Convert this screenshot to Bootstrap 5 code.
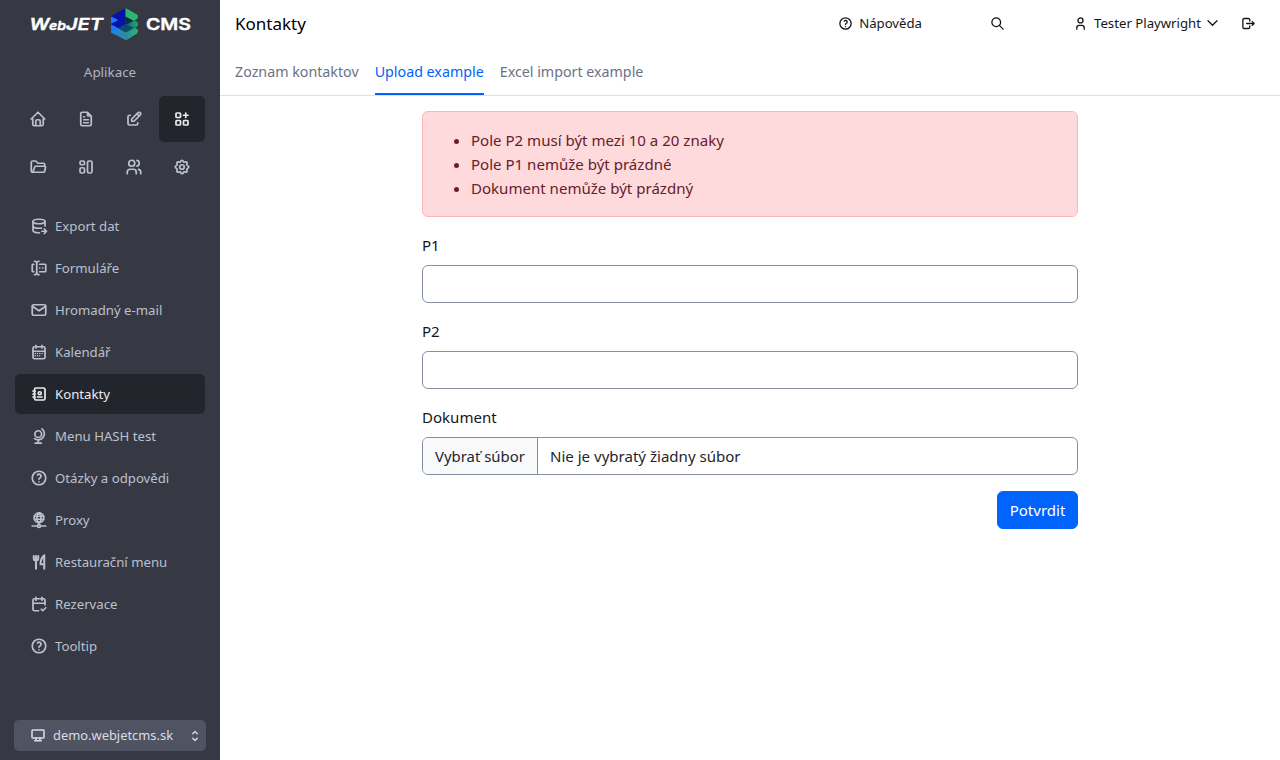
<!DOCTYPE html>
<html lang="cs">
<head>
<meta charset="utf-8">
<meta name="viewport" content="width=device-width, initial-scale=1">
<title>Kontakty</title>
<link href="https://cdn.jsdelivr.net/npm/bootstrap@5.3.0/dist/css/bootstrap.min.css" rel="stylesheet">
<style>
  body { font-family: "Noto Sans", "Open Sans", sans-serif; font-size: 15.05px; line-height: 24px; color: #13151b; }
  .ti { fill: none; stroke: currentColor; stroke-width: 2.3; stroke-linecap: round; stroke-linejoin: round; width: 18px; height: 18px; flex: none; display: block; }
  .ti-sm { width: 15px; height: 15px; stroke-width: 2.1; }
  .sidebar { width: 220px; background: #363944; color: #bcc0cd; font-size: 13.2px; }
  .brand-logo { width: 220px; height: 48px; display: block; }
  .section-title { height: 48px; color: #b0b4c3; font-size: 13.4px; }
  .tiles { display: grid; grid-template-columns: repeat(4, 46px); gap: 2px; padding: 0 15px; }
  .tile { height: 46px; border-radius: 5px; color: inherit; display: flex; align-items: center; justify-content: center; }
  .menu { gap: 2px; margin-top: 16px; padding: 0 15px; }
  .menu .nav-link { height: 40px; padding: 0 0 0 15px; border-radius: 5px; color: inherit; gap: 7px; display: flex; align-items: center; }
  .sidebar .active { background: #23252d; color: #e9eaf0 !important; }
  .domain { height: 31px; margin: 0 14px 9px; padding: 0 7px 0 16px; border-radius: 5px; background: #4f5362; color: #dadce5; font-size: 12.9px; gap: 7px; }
  .domain .ti { width: 16px; height: 16px; }
  .domain span { margin-top: -2px; }
  .topbar { height: 48px; padding: 0 15px; }
  .page-title { font-size: 17px; font-weight: 400; line-height: 24px; color: #000; }
  .tools { font-size: 13.2px; margin-top: -2px; }
  .tools a { color: inherit; text-decoration: none; display: flex; align-items: center; gap: 6px; white-space: nowrap; }
  .help-link { margin-right: 68px; }
  .search-link { margin-right: 68px; }
  .user-link { margin-right: 23px; }
  .exit-link { margin-right: 9px; }
  .tabs { height: 48px; padding: 0 15px; gap: 16px; border-bottom: 1px solid #dde0e6; font-size: 14.25px; }
  .tabs .nav-link { padding: 0; height: 47px; line-height: 47px; color: #6c7186; white-space: nowrap; }
  .tabs .nav-link.active { color: #0063fb; border-bottom: 2px solid #0063fb; }
  .form-wrap { width: 656px; margin: 15px auto 0; }
  .alert-danger { --bs-alert-bg: #ffdadd; --bs-alert-border-color: #ffb4ba; --bs-alert-color: #66202a; border-radius: 6px; padding: 16px; margin-bottom: 16px; }
  .form-label { margin-bottom: 8px; display: block; }
  .form-control, .file-box { border: 1px solid #868ea5; border-radius: 6px; height: 38px; }
  .file-btn { background: #f8f9fb; border-right: 1px solid #868ea5; width: 115px; padding-left: 12px; font-size: 14.9px; }
  .file-box { color: #23252d; }
  .btn-primary { --bs-btn-bg: #0063fb; --bs-btn-border-color: #0063fb; height: 38px; width: 81px; padding: 0; font-size: 15px; }
</style>
</head>
<body class="bg-white">
<svg class="d-none">
  <symbol id="help" viewBox="0 0 24 24"><circle cx="12" cy="12" r="9"/><path d="M12 17v.01M12 13.5a1.5 1.5 0 0 1 1-1.5 2.6 2.6 0 1 0-3-4"/></symbol>
</svg>
<div class="d-flex vh-100 overflow-hidden">
  <aside class="sidebar d-flex flex-column flex-shrink-0">
    <svg class="brand-logo" viewBox="0 0 220 48">
      <g fill="#fff" stroke="#fff" stroke-width=".4" font-family="Inter, Roboto, sans-serif" font-weight="600">
        <g font-style="italic">
          <text x="29.500" y="29.600" font-size="16.500" textLength="20" lengthAdjust="spacingAndGlyphs">W</text>
          <text x="49" y="29.600" font-size="12" textLength="17" lengthAdjust="spacingAndGlyphs">eb</text>
          <text x="66" y="29.600" font-size="16.500" textLength="37" lengthAdjust="spacingAndGlyphs">JET</text>
        </g>
        <text x="146" y="29.600" font-size="16.500" textLength="45" lengthAdjust="spacingAndGlyphs">CMS</text>
      </g>
      <defs>
        <linearGradient id="lg1"><stop stop-color="#2380e8"/><stop offset=".55" stop-color="#2c8c9c"/><stop offset="1" stop-color="#2bb673"/></linearGradient>
        <linearGradient id="lg2"><stop stop-color="#04104c"/><stop offset="1" stop-color="#24a877"/></linearGradient>
      </defs>
      <path d="M111 16.500V33l7.500-4.500L126 32V17z" fill="#1e78f8"/>
      <path d="M111 32.500l7.500-4.500 7.500 4 8.500-4.500 2.500 1.500q2 2 0 4.500l-9.500 6q-1.500.8-3 0z" fill="url(#lg1)"/>
      <path d="M111 24l14.500-7.500L134 20l3 2q2 2 0 4.500l-9.500 5.500q-1.500.8-3 0z" fill="url(#lg2)"/>
      <path d="M111 24l7.500-3.500 7.500 4v7.500z" fill="#0a3db5"/>
      <path d="M111 16.200L125.500 8v16l-7 4-7.500-4 7.500-3.700z" fill="#0713a6"/>
      <path d="M125.500 8l11.500 6.500q2 2 0 4.500l-3.500 2-8-4z" fill="#2cb66f"/>
      <path d="M125.500 16.500l8.200 4.300-8.200 4.200z" fill="#04303c"/>
      <path d="M118.500 28l7-3.500 8.500 3.300-8 4.200z" fill="#0b4b6b"/>
    </svg>
    <div class="section-title d-flex align-items-center justify-content-center">Aplikace</div>
    <div class="tiles">
      <a class="tile" href="#"><svg class="ti" viewBox="0 0 24 24"><path d="M5 12H3l9-9 9 9h-2M5 12v7a2 2 0 0 0 2 2h10a2 2 0 0 0 2-2v-7M9 21v-6a2 2 0 0 1 2-2h2a2 2 0 0 1 2 2v6"/></svg></a>
      <a class="tile" href="#"><svg class="ti" viewBox="0 0 24 24"><path d="M14 3v4a1 1 0 0 0 1 1h4M17 21H7a2 2 0 0 1-2-2V5a2 2 0 0 1 2-2h7l5 5v11a2 2 0 0 1-2 2zM9 9h1M9 13h6M9 17h6"/></svg></a>
      <a class="tile" href="#"><svg class="ti" viewBox="0 0 24 24"><path d="M7 7H6a2 2 0 0 0-2 2v9a2 2 0 0 0 2 2h9a2 2 0 0 0 2-2v-1M20.385 6.585a2.100 2.100 0 0 0-2.970-2.970L9 12v3h3l8.385-8.415zM16 5l3 3"/></svg></a>
      <a class="tile active" href="#"><svg class="ti" viewBox="0 0 24 24"><rect x="4" y="4" width="6" height="6" rx="1"/><rect x="4" y="14" width="6" height="6" rx="1"/><rect x="14" y="14" width="6" height="6" rx="1"/><path d="M14 7h6M17 4v6"/></svg></a>
      <a class="tile" href="#"><svg class="ti" viewBox="0 0 24 24"><path d="M5 19l2.757-7.351A1 1 0 0 1 8.693 11H21a1 1 0 0 1 .986 1.164l-.996 5.211A2 2 0 0 1 19.026 19H5a2 2 0 0 1-2-2V6a2 2 0 0 1 2-2h4l3 3h7a2 2 0 0 1 2 2v2"/></svg></a>
      <a class="tile" href="#"><svg class="ti" viewBox="0 0 24 24"><rect x="4" y="4" width="6" height="5" rx="2"/><rect x="4" y="13" width="6" height="7" rx="2"/><rect x="14" y="4" width="6" height="16" rx="2"/></svg></a>
      <a class="tile" href="#"><svg class="ti" viewBox="0 0 24 24"><circle cx="9" cy="7" r="4"/><path d="M3 21v-2a4 4 0 0 1 4-4h4a4 4 0 0 1 4 4v2M16 3.130a4 4 0 0 1 0 7.750M21 21v-2a4 4 0 0 0-3-3.850"/></svg></a>
      <a class="tile" href="#"><svg class="ti" viewBox="0 0 24 24"><path d="M10.325 4.317c.426-1.756 2.924-1.756 3.350 0a1.724 1.724 0 0 0 2.573 1.066c1.543-.940 3.310.826 2.370 2.370a1.724 1.724 0 0 0 1.065 2.572c1.756.426 1.756 2.924 0 3.350a1.724 1.724 0 0 0-1.066 2.573c.940 1.543-.826 3.310-2.370 2.370a1.724 1.724 0 0 0-2.572 1.065c-.426 1.756-2.924 1.756-3.350 0a1.724 1.724 0 0 0-2.573-1.066c-1.543.940-3.310-.826-2.370-2.370a1.724 1.724 0 0 0-1.065-2.572c-1.756-.426-1.756-2.924 0-3.350a1.724 1.724 0 0 0 1.066-2.573c-.940-1.543.826-3.310 2.370-2.370 1 .608 2.296.070 2.572-1.065z"/><circle cx="12" cy="12" r="3"/></svg></a>
    </div>
    <nav class="menu nav flex-column flex-grow-1">
      <a class="nav-link" href="#"><svg class="ti" viewBox="0 0 24 24"><ellipse cx="12" cy="6" rx="8" ry="3"/><path d="M4 6v6c0 1.657 3.582 3 8 3 1.118 0 2.183-.086 3.150-.241M20 12V6M4 12v6c0 1.657 3.582 3 8 3 .157 0 .312-.002.466-.005M16 19h6M19 16l3 3-3 3"/></svg>Export dat</a>
      <a class="nav-link" href="#"><svg class="ti" viewBox="0 0 24 24"><path d="M12 3a3 3 0 0 0-3 3v12a3 3 0 0 0 3 3M6 3a3 3 0 0 1 3 3v12a3 3 0 0 1-3 3M13 7h7a1 1 0 0 1 1 1v8a1 1 0 0 1-1 1h-7M5 7H4a1 1 0 0 0-1 1v8a1 1 0 0 0 1 1h1M17 12h.01M13 12h.01"/></svg>Formuláře</a>
      <a class="nav-link" href="#"><svg class="ti" viewBox="0 0 24 24"><rect x="3" y="5" width="18" height="14" rx="2"/><path d="M3 7l9 6 9-6"/></svg>Hromadný e-mail</a>
      <a class="nav-link" href="#"><svg class="ti" viewBox="0 0 24 24"><rect x="4" y="5" width="16" height="16" rx="2"/><path d="M16 3v4M8 3v4M4 11h16M7 14h.013M10.010 14h.005M13.010 14h.005M16.015 14h.005M13.015 17h.005M7.010 17h.005M10.010 17h.005" stroke-width="2"/></svg>Kalendář</a>
      <a class="nav-link active" href="#"><svg class="ti" viewBox="0 0 24 24"><path d="M20 6v12a2 2 0 0 1-2 2H8a2 2 0 0 1-2-2V6a2 2 0 0 1 2-2h10a2 2 0 0 1 2 2zM10 16h6M4 8h3M4 12h3M4 16h3"/><circle cx="13" cy="11" r="2"/></svg>Kontakty</a>
      <a class="nav-link" href="#"><svg class="ti" viewBox="0 0 24 24"><circle cx="11" cy="9.500" r="4.500"/><path d="M6 15.500A8.200 8.200 0 1 0 16 2.500M11 18v3.500M7 21.500h8"/></svg>Menu HASH test</a>
      <a class="nav-link" href="#"><svg class="ti"><use href="#help"/></svg>Otázky a odpovědi</a>
      <a class="nav-link" href="#"><svg class="ti" viewBox="0 0 24 24"><circle cx="12" cy="9" r="6.500"/><path d="M12 2.500c1.333.5 2.800 3 2.800 6.500s-1.467 6-2.800 6.500c-1.333-.5-2.800-3-2.800-6.500s1.467-6 2.800-6.500M6 7h12M6 11h12M3 20h7M14 20h7M12 15v3"/><circle cx="12" cy="20" r="2"/></svg>Proxy</a>
      <a class="nav-link" href="#"><svg class="ti" viewBox="0 0 24 24"><path d="M19 3v12h-5c-.023-3.681.184-7.406 5-12zM19 15v6M8 4v17M5 4v3a3 3 0 1 0 6 0V4M8 4v5" stroke-width="2.700"/></svg>Restaurační menu</a>
      <a class="nav-link" href="#"><svg class="ti" viewBox="0 0 24 24"><path d="M11.500 21H6a2 2 0 0 1-2-2V7a2 2 0 0 1 2-2h12a2 2 0 0 1 2 2v6M16 3v4M8 3v4M4 11h16M15 19l2 2 4-4"/></svg>Rezervace</a>
      <a class="nav-link" href="#"><svg class="ti"><use href="#help"/></svg>Tooltip</a>
    </nav>
    <div class="domain d-flex align-items-center">
      <svg class="ti" viewBox="0 0 24 24"><rect x="3" y="3" width="18" height="12" rx="1"/><path d="M7 19h10M9 15v4M15 15v4"/></svg>
      <span class="me-auto">demo.webjetcms.sk</span>
      <svg width="8" height="12" viewBox="0 0 8 12" fill="none" stroke="currentColor" stroke-width="1.300" stroke-linecap="round" stroke-linejoin="round"><path d="M1.700 3.800L4 1.500 6.300 3.800M1.700 8.200L4 10.500 6.300 8.200"/></svg>
    </div>
  </aside>
  <main class="flex-grow-1">
    <header class="topbar d-flex align-items-center">
      <h1 class="page-title mb-0 me-auto">Kontakty</h1>
      <div class="tools d-flex align-items-center">
        <a class="help-link" href="#"><svg class="ti ti-sm"><use href="#help"/></svg>Nápověda</a>
        <a class="search-link" href="#" aria-label="Hledat"><svg class="ti ti-sm" viewBox="0 0 24 24"><circle cx="10" cy="10" r="7"/><path d="M21 21l-6-6"/></svg></a>
        <a class="user-link" href="#"><svg class="ti ti-sm" viewBox="0 0 24 24"><circle cx="12" cy="7" r="4"/><path d="M6 21v-2a4 4 0 0 1 4-4h4a4 4 0 0 1 4 4v2"/></svg>Tester Playwright<svg width="11" height="8" viewBox="0 0 11 8" fill="none" stroke="currentColor" stroke-width="1.300" stroke-linecap="round" stroke-linejoin="round"><path d="M1 1.700l4.500 4.500L10 1.700"/></svg></a>
        <a class="exit-link" href="#" aria-label="Odhlásit"><svg class="ti ti-sm" viewBox="0 0 24 24"><path d="M14 8V6a2 2 0 0 0-2-2H5a2 2 0 0 0-2 2v12a2 2 0 0 0 2 2h7a2 2 0 0 0 2-2v-2M9 12h12l-3-3M18 15l3-3"/></svg></a>
      </div>
    </header>
    <nav class="tabs nav flex-nowrap">
      <a class="nav-link" href="#">Zoznam kontaktov</a>
      <a class="nav-link active" href="#">Upload example</a>
      <a class="nav-link" href="#">Excel import example</a>
    </nav>
    <form class="form-wrap">
      <div class="alert alert-danger"><ul class="mb-0"><li>Pole P2 musí být mezi 10 a 20 znaky</li><li>Pole P1 nemůže být prázdné</li><li>Dokument nemůže být prázdný</li></ul></div>
      <div class="mb-3"><label class="form-label" for="p1">P1</label><input class="form-control" id="p1"></div>
      <div class="mb-3"><label class="form-label" for="p2">P2</label><input class="form-control" id="p2"></div>
      <div class="mb-3"><span class="form-label">Dokument</span>
        <div class="file-box d-flex align-items-stretch overflow-hidden"><span class="file-btn d-flex align-items-center text-nowrap">Vybrať súbor</span><span class="d-flex align-items-center ps-2 ms-1">Nie je vybratý žiadny súbor</span></div>
      </div>
      <div class="text-end"><button type="button" class="btn btn-primary">Potvrdit</button></div>
    </form>
  </main>
</div>
<script src="https://cdn.jsdelivr.net/npm/bootstrap@5.3.0/dist/js/bootstrap.bundle.min.js"></script>
</body>
</html>
